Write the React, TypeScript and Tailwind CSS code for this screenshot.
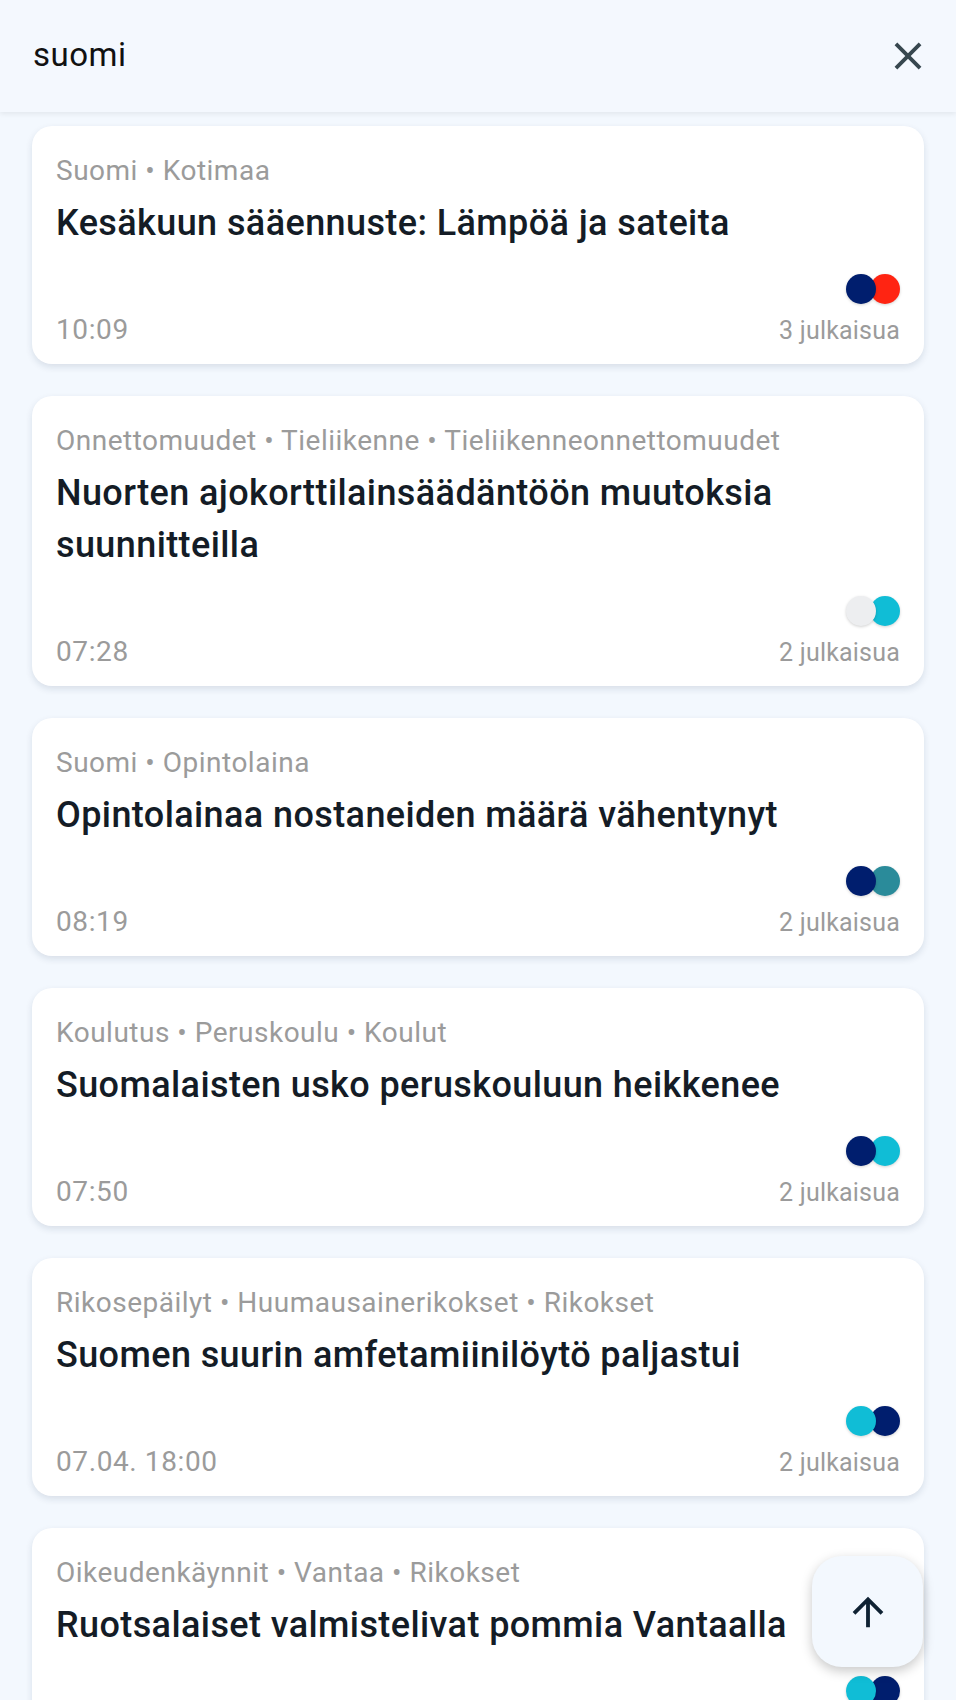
import React from "react";

const DOT: Record<string, string> = {
  navy: "bg-[#001e6e]",
  red: "bg-[#ff2412]",
  gray: "bg-[#edeef0]",
  cyan: "bg-[#10bdd6]",
  teal: "bg-[#2a8b9a]",
};

type Item = {
  cats: string[];
  title: string;
  time: string;
  count: string;
  dots: string[];
};

const items: Item[] = [
  {
    cats: ["Suomi", "Kotimaa"],
    title: "Kesäkuun sääennuste: Lämpöä ja sateita",
    time: "10:09",
    count: "3 julkaisua",
    dots: ["navy", "red"],
  },
  {
    cats: ["Onnettomuudet", "Tieliikenne", "Tieliikenneonnettomuudet"],
    title: "Nuorten ajokorttilainsäädäntöön muutoksia suunnitteilla",
    time: "07:28",
    count: "2 julkaisua",
    dots: ["gray", "cyan"],
  },
  {
    cats: ["Suomi", "Opintolaina"],
    title: "Opintolainaa nostaneiden määrä vähentynyt",
    time: "08:19",
    count: "2 julkaisua",
    dots: ["navy", "teal"],
  },
  {
    cats: ["Koulutus", "Peruskoulu", "Koulut"],
    title: "Suomalaisten usko peruskouluun heikkenee",
    time: "07:50",
    count: "2 julkaisua",
    dots: ["navy", "cyan"],
  },
  {
    cats: ["Rikosepäilyt", "Huumausainerikokset", "Rikokset"],
    title: "Suomen suurin amfetamiinilöytö paljastui",
    time: "07.04. 18:00",
    count: "2 julkaisua",
    dots: ["cyan", "navy"],
  },
  {
    cats: ["Oikeudenkäynnit", "Vantaa", "Rikokset"],
    title: "Ruotsalaiset valmistelivat pommia Vantaalla",
    time: "07.04. 14:12",
    count: "2 julkaisua",
    dots: ["cyan", "navy"],
  },
];

function Card({ item }: { item: Item }) {
  return (
    <div className="bg-white rounded-[20px] shadow-[0_3px_7px_rgba(20,40,70,0.12)] px-6 pt-6 pb-[18px]">
      <div className="text-[28px] leading-[42px] tracking-[0.5px] text-[#9b9b9b] whitespace-nowrap">
        {item.cats.join(" • ")}
      </div>
      <div className="mt-[5px] text-[36px] leading-[52px] tracking-[0.4px] font-medium text-[#141c26]">
        {item.title}
      </div>
      <div className="mt-[25px] flex items-end justify-between">
        <div className="text-[28px] leading-[32px] tracking-[0.6px] text-[#9b9b9b]">{item.time}</div>
        <div className="flex flex-col items-end">
          <div className="flex">
            {item.dots.map((d, i) => (
              <div
                key={i}
                className={
                  "w-[30px] h-[30px] rounded-full shadow-[0_1px_3px_rgba(0,0,0,0.18)] " +
                  DOT[d] +
                  (i === 0 ? " relative z-[2]" : " relative z-[1] -ml-[6px]")
                }
              />
            ))}
          </div>
          <div className="mt-3 text-[25px] leading-[30px] tracking-[0.2px] text-[#9b9b9b]">{item.count}</div>
        </div>
      </div>
    </div>
  );
}

export default function App() {
  return (
    <div
      className="relative h-[1700px] w-full overflow-hidden bg-[#f3f8fe]"
      style={{ fontFamily: "Roboto, 'Noto Sans', Arial, sans-serif" }}
    >
      <div className="relative z-10 h-[112px] bg-[#f4f8fe] shadow-[0_2px_5px_rgba(0,0,0,0.07)] flex items-center justify-between pl-[33px] pr-[25px]">
        <div className="text-[33px] leading-[40px] tracking-[0.5px] text-[#111111] -mt-[2px]">suomi</div>
        <svg width="46" height="46" viewBox="0 0 24 24" className="fill-[#37474f]">
          <path d="M19 6.41L17.59 5 12 10.59 6.41 5 5 6.41 10.59 12 5 17.59 6.41 19 12 13.41 17.59 19 19 17.59 13.41 12z" />
        </svg>
      </div>
      <div className="flex flex-col gap-8 px-8 pt-[14px]">
        {items.map((it, i) => (
          <Card key={i} item={it} />
        ))}
      </div>
      <div className="absolute right-[33px] bottom-[33px] z-20 w-[111px] h-[111px] rounded-[30px] bg-[#f3f8fe] shadow-[0_4px_12px_rgba(0,0,0,0.22)] flex items-center justify-center">
        <svg width="46" height="46" viewBox="0 0 24 24" className="fill-[#0f2233]">
          <path d="M4 12l1.41 1.41L11 7.83V20h2V7.83l5.58 5.59L20 12l-8-8-8 8z" />
        </svg>
      </div>
    </div>
  );
}
